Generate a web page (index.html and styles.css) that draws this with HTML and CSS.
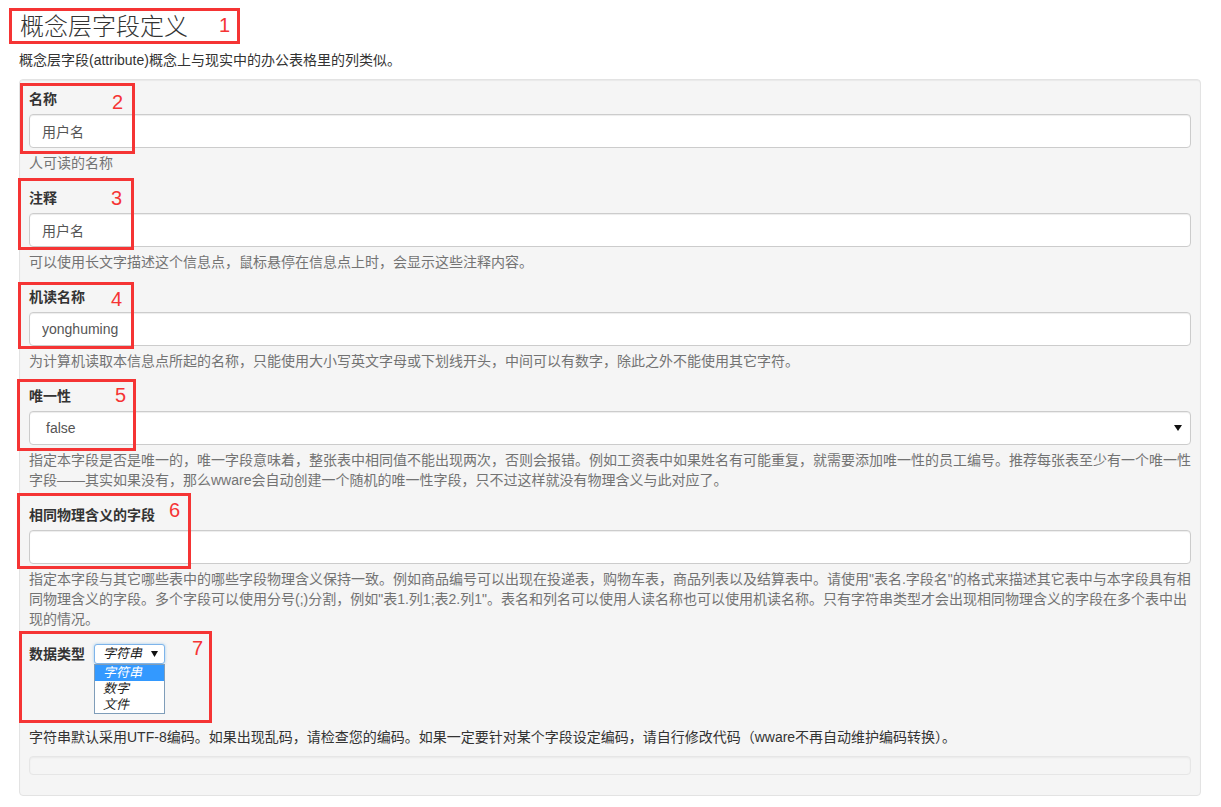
FILE: index.html
```html
<!DOCTYPE html>
<html lang="zh-CN">
<head>
<meta charset="utf-8">
<title>概念层字段定义</title>
<link rel="stylesheet" href="styles.css">
</head>
<body>
<div class="page">
  <h1 class="title">概念层字段定义</h1>
  <p class="intro">概念层字段(attribute)概念上与现实中的办公表格里的列类似。</p>

  <div class="well">
    <div class="group">
      <div class="label">名称</div>
      <input class="field" type="text" value="用户名" readonly>
      <p class="help">人可读的名称</p>
    </div>
    <div class="group">
      <div class="label">注释</div>
      <input class="field" type="text" value="用户名" readonly>
      <p class="help">可以使用长文字描述这个信息点，鼠标悬停在信息点上时，会显示这些注释内容。</p>
    </div>
    <div class="group">
      <div class="label">机读名称</div>
      <input class="field" type="text" value="yonghuming" readonly>
      <p class="help">为计算机读取本信息点所起的名称，只能使用大小写英文字母或下划线开头，中间可以有数字，除此之外不能使用其它字符。</p>
    </div>
    <div class="group">
      <div class="label">唯一性</div>
      <div class="field select">
        <span class="select-value">false</span>
        <svg class="arrow" width="8" height="6" viewBox="0 0 8 6"><path d="M0 0H8L4 6Z" fill="#111"/></svg>
      </div>
      <p class="help">指定本字段是否是唯一的，唯一字段意味着，整张表中相同值不能出现两次，否则会报错。例如工资表中如果姓名有可能重复，就需要添加唯一性的员工编号。推荐每张表至少有一个唯一性字段——其实如果没有，那么wware会自动创建一个随机的唯一性字段，只不过这样就没有物理含义与此对应了。</p>
    </div>
    <div class="group">
      <div class="label">相同物理含义的字段</div>
      <input class="field" type="text" value="" readonly>
      <p class="help">指定本字段与其它哪些表中的哪些字段物理含义保持一致。例如商品编号可以出现在投递表，购物车表，商品列表以及结算表中。请使用"表名.字段名"的格式来描述其它表中与本字段具有相同物理含义的字段。多个字段可以使用分号(;)分割，例如"表1.列1;表2.列1"。表名和列名可以使用人读名称也可以使用机读名称。只有字符串类型才会出现相同物理含义的字段在多个表中出现的情况。</p>
    </div>
    <div class="type-row">
      <div class="label">数据类型</div>
      <div class="mini">
        <div class="mini-box">
          <span>字符串</span>
          <svg class="mini-arrow" width="7" height="6" viewBox="0 0 7 6"><path d="M0 0H7L3.5 6Z" fill="#111"/></svg>
        </div>
        <ul class="mini-list">
          <li class="on">字符串</li>
          <li>数字</li>
          <li>文件</li>
        </ul>
      </div>
    </div>
    <p class="note">字符串默认采用UTF-8编码。如果出现乱码，请检查您的编码。如果一定要针对某个字段设定编码，请自行修改代码（wware不再自动维护编码转换）。</p>
    <div class="bar"></div>
  </div>

  <div class="mark m1"></div><span class="num n1">1</span>
  <div class="mark m2"></div><span class="num n2">2</span>
  <div class="mark m3"></div><span class="num n3">3</span>
  <div class="mark m4"></div><span class="num n4">4</span>
  <div class="mark m5"></div><span class="num n5">5</span>
  <div class="mark m6"></div><span class="num n6">6</span>
  <div class="mark m7"></div><span class="num n7">7</span>
</div>
</body>
</html>
```

FILE: styles.css
```css
* { box-sizing: border-box; }

html, body {
  margin: 0;
  padding: 0;
  background: #fff;
}

body {
  font-family: "Liberation Sans", "Noto Sans CJK SC", sans-serif;
  font-size: 14px;
  line-height: 20px;
  color: #333;
}

.page {
  position: relative;
  width: 1221px;
  padding: 10px 20px 0 19px;
}

.title {
  margin: 0 0 0 1px;
  font-size: 24px;
  line-height: 30px;
  font-weight: 300;
  color: #333;
  font-family: "Noto Sans CJK SC", sans-serif;
}

.intro {
  margin: 10px 0 0 0;
  line-height: 20px;
  color: #333;
}

.well {
  margin-top: 9px;
  background: #f5f5f5;
  border: 1px solid #e3e3e3;
  border-radius: 4px;
  padding: 9px 9px 20px 9px;
  box-shadow: inset 0 1px 1px rgba(0,0,0,0.05);
}

.group {
  margin-bottom: 15px;
}

.label {
  font-weight: bold;
  line-height: 20px;
  margin-bottom: 5px;
  color: #333;
}

.field {
  display: block;
  width: 100%;
  height: 34px;
  padding: 6px 12px;
  font-family: "Liberation Sans", "Noto Sans CJK SC", sans-serif;
  font-size: 14px;
  line-height: 20px;
  color: #555;
  background: #fff;
  border: 1px solid #ccc;
  border-radius: 4px;
  box-shadow: inset 0 1px 1px rgba(0,0,0,0.075);
  outline: none;
  margin: 0;
}

.select {
  display: flex;
  align-items: center;
  justify-content: space-between;
  padding: 6px 8px 6px 16px;
}

.select-value {
  color: #555;
}

.arrow {
  display: block;
}

.help {
  margin: 5px 0 0 0;
  line-height: 20px;
  color: #737373;
}

.type-row {
  display: flex;
  align-items: flex-start;
  gap: 9px;
}

.type-row .label {
  margin-bottom: 0;
}

.mini {
  width: 71px;
}

.mini-box {
  height: 20px;
  border: 1px solid #7eb4ea;
  border-radius: 3px;
  background: #fff;
  box-shadow: 0 0 3px rgba(102,175,233,0.6);
  display: flex;
  align-items: center;
  justify-content: space-between;
  padding: 0 6px 0 8px;
  font-size: 13px;
  font-style: italic;
  color: #222;
  line-height: 18px;
}

.mini-arrow {
  display: block;
}

.mini-list {
  list-style: none;
  margin: 0;
  padding: 0;
  border: 1px solid #7f9db9;
  background: #fff;
  width: 71px;
}

.mini-list li {
  height: 16px;
  line-height: 16px;
  font-size: 13px;
  font-style: italic;
  padding-left: 8px;
  color: #222;
}

.mini-list li.on {
  background: #3399ff;
  color: #fff;
}

.note {
  margin: 13px 0 0 0;
  line-height: 20px;
  color: #333;
}

.bar {
  margin-top: 9px;
  height: 19px;
  background: #f5f5f5;
  border: 1px solid #e6e6e6;
  border-radius: 4px;
  box-shadow: inset 0 1px 2px rgba(0,0,0,0.05);
}

/* annotation overlays */
.mark {
  position: absolute;
  border: 3px solid #f53434;
  pointer-events: none;
}

.m1 { left: 9px;  top: 8px;   width: 231px; height: 36px; }
.m2 { left: 20px; top: 83px;  width: 115px; height: 71px; }
.m3 { left: 18px; top: 178px; width: 116px; height: 72px; }
.m4 { left: 18px; top: 282px; width: 116px; height: 67px; }
.m5 { left: 17px; top: 379px; width: 119px; height: 72px; }
.m6 { left: 17px; top: 493px; width: 174px; height: 76px; }
.m7 { left: 19px; top: 631px; width: 193px; height: 92px; }

.num {
  position: absolute;
  font-family: "Liberation Sans", sans-serif;
  font-size: 20px;
  line-height: 20px;
  color: #f53434;
}

.n1 { left: 219px; top: 15px; }
.n2 { left: 112px; top: 92px; }
.n3 { left: 111px; top: 188px; }
.n4 { left: 111px; top: 289px; }
.n5 { left: 115px; top: 385px; }
.n6 { left: 169px; top: 500px; }
.n7 { left: 192px; top: 638px; }
```
